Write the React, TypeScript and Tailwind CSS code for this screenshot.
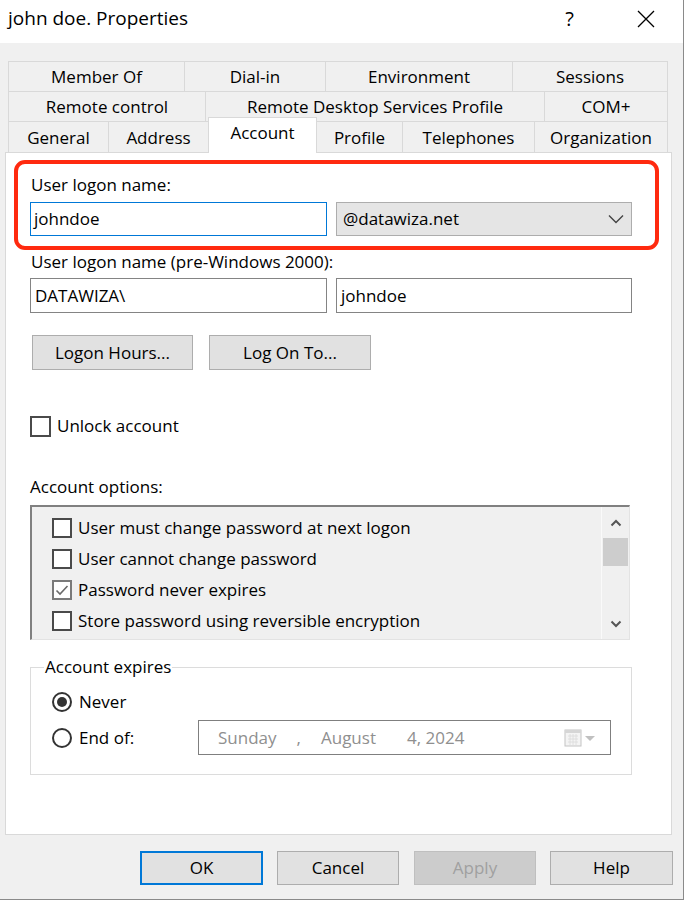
import React from "react";

const Tab = ({ label, w, last }: { label: string; w: number; last?: boolean }) => (
  <div
    className={`flex items-center justify-center border-t border-l border-[#d9d9d9] bg-[#f0f0f0] ${last ? "border-r" : ""}`}
    style={{ width: w }}
  >
    {label}
  </div>
);

const Box = ({ checked }: { checked?: boolean }) => (
  <div
    className={`w-[20px] h-[20px] shrink-0 bg-white border-2 flex items-center justify-center ${
      checked ? "border-[#7a7a7a]" : "border-[#4a4a4a]"
    }`}
  >
    {checked && (
      <svg width="14" height="12" viewBox="0 0 14 12">
        <path d="M1.5 6.5 L5 10 L12.5 2" fill="none" stroke="#6a6a6a" strokeWidth="1.6" />
      </svg>
    )}
  </div>
);

const Radio = ({ on }: { on?: boolean }) => (
  <div className="w-[20px] h-[20px] shrink-0 rounded-full border-2 border-[#333] bg-white flex items-center justify-center">
    {on && <div className="w-[10px] h-[10px] rounded-full bg-[#333]" />}
  </div>
);

export default function App() {
  return (
    <div
      className="w-[686px] h-[906px] bg-white overflow-hidden text-[17px] text-black"
      style={{ fontFamily: "'Open Sans', 'Noto Sans', sans-serif" }}
    >
      <div className="w-[684px] h-[900px] bg-[#f0f0f0] border-r border-b border-[#8a8a8a] flex flex-col">
        {/* Title bar */}
        <div className="h-[43px] bg-white flex items-center pl-[8px] shrink-0">
          <div className="text-[19px] leading-none -mt-[6px]">john doe. Properties</div>
          <div className="flex-1" />
          <div className="text-[20px] leading-none -mt-[6px] mr-[63px]">?</div>
          <svg width="18" height="18" viewBox="0 0 18 18" className="mr-[28px] -mt-[6px]">
            <path d="M1 1 L17 17 M17 1 L1 17" stroke="#000" strokeWidth="1.3" />
          </svg>
        </div>

        {/* Tabs */}
        <div className="ml-[8px] mt-[18px] w-[660px] flex flex-col leading-none">
          <div className="flex h-[30px]">
            <Tab label="Member Of" w={176} />
            <Tab label="Dial-in" w={141} />
            <Tab label="Environment" w={187} />
            <Tab label="Sessions" w={156} last />
          </div>
          <div className="flex h-[30px]">
            <Tab label="Remote control" w={197} />
            <Tab label="Remote Desktop Services Profile" w={339} />
            <Tab label="COM+" w={124} last />
          </div>
          <div className="flex h-[31px] items-end">
            <div className="flex h-[31px] w-[100px] items-center justify-center border-t border-l border-[#d9d9d9]">General</div>
            <div className="flex h-[31px] w-[100px] items-center justify-center border-t border-l border-[#d9d9d9]">Address</div>
            <div className="relative z-10 flex h-[36px] w-[109px] -mb-px items-center justify-center pb-[6px] bg-white border-t border-l border-r border-[#d9d9d9]">
              Account
            </div>
            <div className="flex h-[31px] w-[85px] items-center justify-center border-t border-[#d9d9d9]">Profile</div>
            <div className="flex h-[31px] w-[132px] items-center justify-center border-t border-l border-[#d9d9d9]">Telephones</div>
            <div className="flex h-[31px] w-[134px] items-center justify-center border-t border-l border-r border-[#d9d9d9]">Organization</div>
          </div>
        </div>

        {/* Panel */}
        <div className="relative ml-[5px] w-[667px] h-[683px] bg-white border border-[#d9d9d9] pl-[24px] shrink-0">
          <div className="leading-[22px] mt-[21px] pl-[1px]">User logon name:</div>
          <div className="flex mt-[6px] gap-[9px]">
            <div className="w-[297px] h-[34px] border border-[#0078d7] flex items-center pl-[3px]">johndoe</div>
            <div className="w-[296px] h-[34px] border border-[#adadad] bg-[#e5e5e5] flex items-center pl-[6px]">
              <span className="flex-1">@datawiza.net</span>
              <svg width="16" height="10" viewBox="0 0 16 10" className="mr-[7px]">
                <path d="M1 1.5 L8 8.5 L15 1.5" fill="none" stroke="#444" strokeWidth="1.4" />
              </svg>
            </div>
          </div>

          <div className="leading-[22px] mt-[15px] pl-[1px]">User logon name (pre-Windows 2000):</div>
          <div className="flex mt-[5px] gap-[9px]">
            <div className="w-[297px] h-[35px] border border-[#848484] flex items-center pl-[4px]">DATAWIZA\</div>
            <div className="w-[296px] h-[35px] border border-[#848484] flex items-center pl-[4px]">johndoe</div>
          </div>

          <div className="flex mt-[22px] ml-[2px] gap-[16px]">
            <div className="w-[161px] h-[35px] bg-[#e1e1e1] border border-[#adadad] flex items-center justify-center">
              Logon Hours...
            </div>
            <div className="w-[162px] h-[35px] bg-[#e1e1e1] border border-[#adadad] flex items-center justify-center">
              Log On To...
            </div>
          </div>

          <div className="flex items-center h-[22px] mt-[45px] gap-[6px]">
            <div className="w-[21px] h-[21px] border-2 border-[#4a4a4a] bg-white" />
            <span>Unlock account</span>
          </div>

          <div className="leading-[22px] mt-[39px]">Account options:</div>

          {/* List box */}
          <div className="mt-[7px] w-[600px] h-[135px] flex bg-[#f0f0f0] border-t-2 border-l-2 border-[#808080] border-b border-r border-b-[#e3e3e3] border-r-[#e3e3e3]">
            <div className="flex-1 pl-[20px] pt-[5px]">
              {[
                ["User must change password at next logon", false],
                ["User cannot change password", false],
                ["Password never expires", true],
                ["Store password using reversible encryption", false],
              ].map(([t, c]) => (
                <div key={t as string} className="h-[31px] flex items-center gap-[6px]">
                  <Box checked={c as boolean} />
                  <span>{t as string}</span>
                </div>
              ))}
            </div>
            <div className="w-[28px] flex flex-col border-l border-[#fafafa]">
              <div className="h-[31px] flex items-center justify-center">
                <svg width="12" height="8" viewBox="0 0 12 8">
                  <path d="M1.5 6.5 L6 2 L10.5 6.5" fill="none" stroke="#555" strokeWidth="2" />
                </svg>
              </div>
              <div className="h-[28px] mx-[1px] bg-[#cdcdcd]" />
              <div className="flex-1" />
              <div className="h-[31px] flex items-center justify-center">
                <svg width="12" height="8" viewBox="0 0 12 8">
                  <path d="M1.5 1.5 L6 6 L10.5 1.5" fill="none" stroke="#555" strokeWidth="2" />
                </svg>
              </div>
            </div>
          </div>

          {/* Group box */}
          <div className="relative mt-[27px] w-[602px] h-[108px] border border-[#dcdcdc]">
            <div className="absolute left-[13px] -top-[12px] bg-white px-[1px] leading-[22px]">Account expires</div>
            <div className="pl-[21px]">
              <div className="flex items-center h-[22px] mt-[23px] gap-[7px]">
                <Radio on />
                <span>Never</span>
              </div>
              <div className="flex items-center h-[35px] mt-[7px]">
                <div className="w-[146px] flex items-center gap-[7px]">
                  <Radio />
                  <span>End of:</span>
                </div>
                <div className="w-[413px] h-[35px] border border-[#7f7f7f] flex items-center pl-[19px] text-[#8f8f8f]">
                  <span>Sunday</span>
                  <span className="ml-[20px]">,</span>
                  <span className="ml-[20px]">August</span>
                  <span className="ml-[31px]">4, 2024</span>
                  <span className="flex-1" />
                  <svg width="34" height="20" viewBox="0 0 34 20" className="mr-[12px]">
                    <rect x="1" y="2" width="16" height="16" fill="#f4f4f4" stroke="#c4c4c4" />
                    <rect x="1" y="2" width="16" height="3" fill="#d6d6d6" />
                    <path d="M4 8h10M4 11h10M4 14h10M6 6v11M9 6v11M12 6v11" stroke="#dadada" strokeWidth="0.8" />
                    <path d="M21 8 L31 8 L26 13 Z" fill="#c0c0c0" />
                  </svg>
                </div>
              </div>
            </div>
          </div>

          {/* Red highlight */}
          <div className="absolute left-[8px] top-[7px] w-[645px] h-[90px] border-4 border-[#ff2a0f] rounded-[11px] pointer-events-none" />
        </div>

        {/* Bottom buttons */}
        <div className="flex mt-[16px] ml-[140px] gap-[14px]">
          <div className="w-[123px] h-[34px] bg-[#e1e1e1] border-2 border-[#0078d7] flex items-center justify-center">OK</div>
          <div className="w-[122px] h-[34px] bg-[#e1e1e1] border border-[#adadad] flex items-center justify-center">Cancel</div>
          <div className="w-[122px] h-[34px] bg-[#cccccc] border border-[#bfbfbf] flex items-center justify-center text-[#a0a0a0] ml-[1px]">
            Apply
          </div>
          <div className="w-[123px] h-[34px] bg-[#e1e1e1] border border-[#adadad] flex items-center justify-center">Help</div>
        </div>
      </div>
    </div>
  );
}
